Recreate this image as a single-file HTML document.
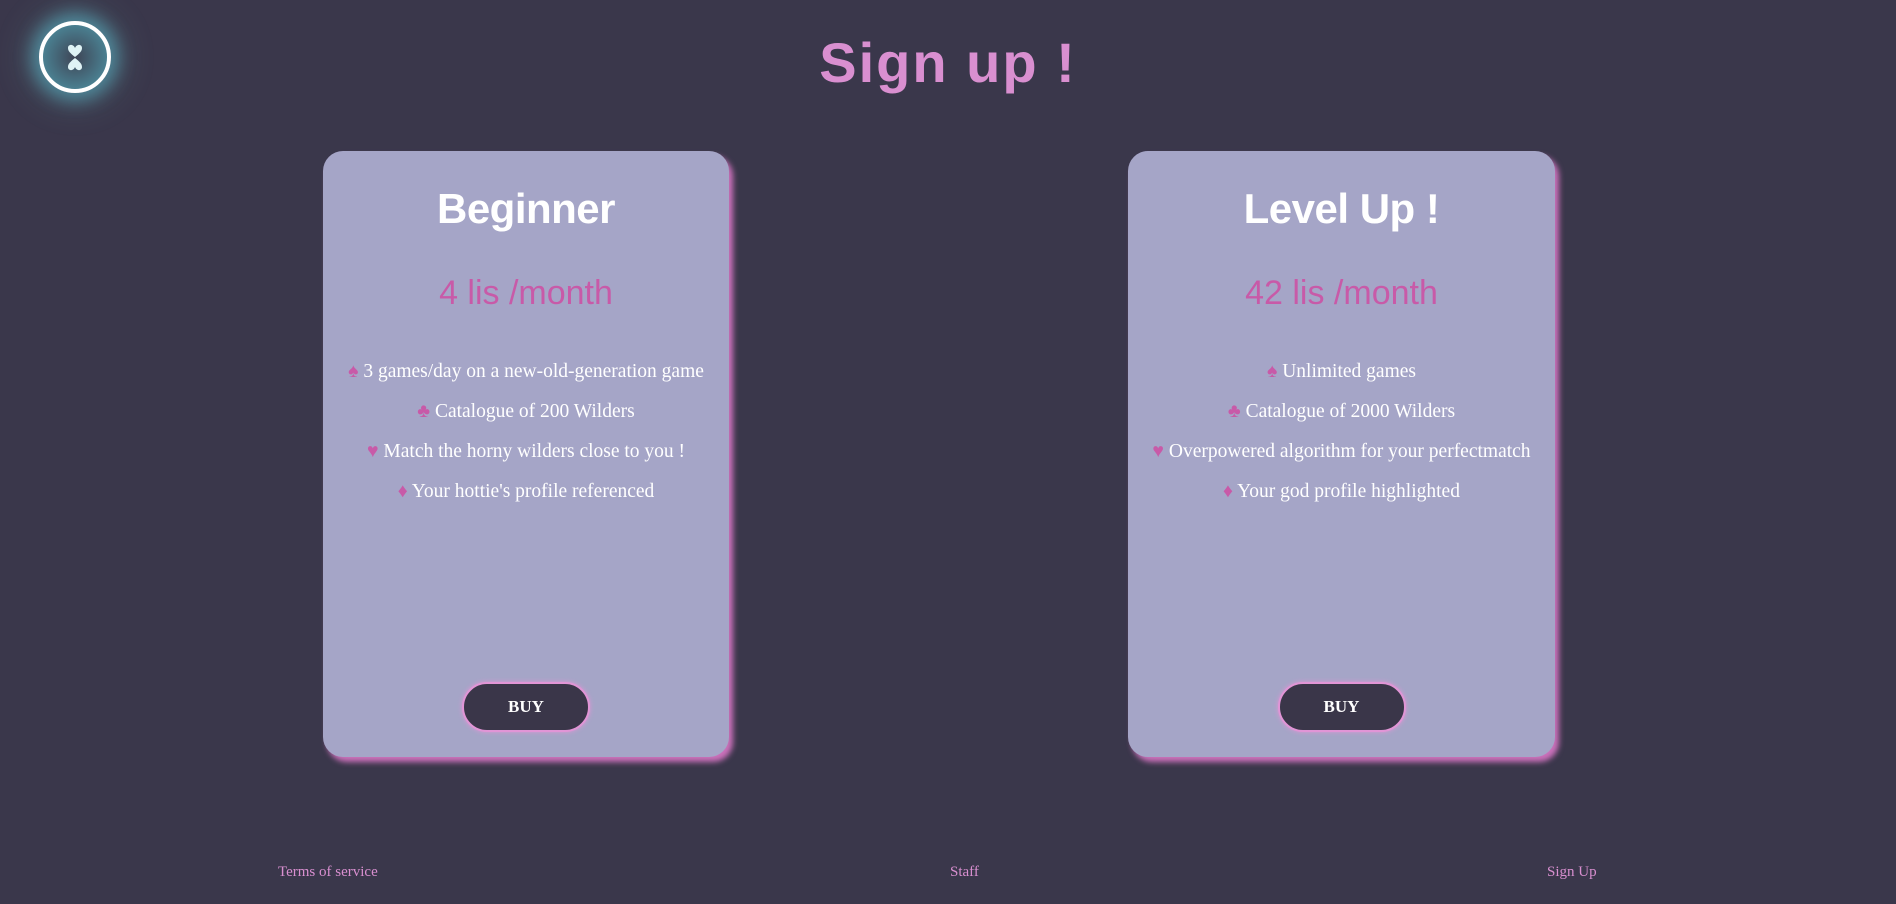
<!DOCTYPE html>
<html><head><meta charset="utf-8"><style>
html,body{margin:0;padding:0;}
body{width:1896px;height:904px;background:#3a374b;position:relative;overflow:hidden;font-family:"Liberation Serif",serif;}
.logo{position:absolute;left:39px;top:21px;width:72px;height:72px;border:4px solid #fff;border-radius:50%;box-sizing:border-box;
 background:radial-gradient(circle at 50% 50%,#3e4556 0%,#4a7f90 70%,#6aa6a8 100%);
 box-shadow:0 0 16px 8px rgba(90,190,210,.5),0 0 32px 14px rgba(120,200,190,.2);}
h1{position:absolute;left:0;width:1896px;top:28px;margin:0;text-align:center;font-family:"Liberation Sans",sans-serif;font-weight:bold;font-size:56px;letter-spacing:2px;color:#d98fd0;line-height:70px;}
.card{position:absolute;top:151px;height:606px;background:#a5a5c7;border-radius:20px;box-shadow:4px 5px 6px rgba(220,120,200,.9);text-align:center;color:#fff;}
.card h2{margin:0;position:absolute;width:100%;top:28px;font-family:"Liberation Sans",sans-serif;font-weight:bold;font-size:42px;line-height:60px;letter-spacing:-0.5px;}
.price{position:absolute;top:119px;width:100%;font-family:"Liberation Sans",sans-serif;font-size:34px;color:#c85aa8;line-height:46px;}
.list{position:absolute;top:201px;width:100%;font-size:19.5px;line-height:40px;}
.list span{color:#c85aa8;}
.buy{position:absolute;top:531px;left:50%;margin-left:-64px;width:128px;height:50px;box-sizing:border-box;background:#3a3649;border:2px solid #e195d6;border-radius:25px;box-shadow:0 0 5px #e195d6;color:#fff;font-weight:bold;font-size:17px;line-height:46px;}
.foot{position:absolute;top:864px;font-size:15px;color:#d98fd0;}
</style></head><body>
<div class="logo"><svg width="64" height="64" viewBox="0 0 64 64" style="position:absolute;left:0;top:0"><path d="M32 32 C27 28 25 26 25 23 C25 20.5 27 19.5 29 20 C30.5 20.5 31.5 21.5 32 23 C32.5 21.5 33.5 20.5 35 20 C37 19.5 39 20.5 39 23 C39 26 37 28 32 32Z" fill="#dff3f5"/><path d="M32 33 C27 37 25 39 25 42 C25 44.5 27 45.5 29 45 C30.5 44.5 31.5 43.5 32 42 C32.5 43.5 33.5 44.5 35 45 C37 45.5 39 44.5 39 42 C39 39 37 37 32 33Z" fill="#dff3f5"/></svg></div>
<h1>Sign up !</h1>
<div class="card" style="left:323px;width:406px">
<h2>Beginner</h2>
<div class="price">4 lis /month</div>
<div class="list">
<div><span>♠</span> 3 games/day on a new-old-generation game</div>
<div><span>♣</span> Catalogue of 200 Wilders</div>
<div><span>♥</span> Match the horny wilders close to you !</div>
<div><span>♦</span> Your hottie's profile referenced</div>
</div>
<div class="buy">BUY</div>
</div>
<div class="card" style="left:1128px;width:427px">
<h2>Level Up !</h2>
<div class="price">42 lis /month</div>
<div class="list">
<div><span>♠</span> Unlimited games</div>
<div><span>♣</span> Catalogue of 2000 Wilders</div>
<div><span>♥</span> Overpowered algorithm for your perfectmatch</div>
<div><span>♦</span> Your god profile highlighted</div>
</div>
<div class="buy">BUY</div>
</div>
<div class="foot" style="left:278px">Terms of service</div>
<div class="foot" style="left:950px">Staff</div>
<div class="foot" style="left:1547px">Sign Up</div>
</body></html>
